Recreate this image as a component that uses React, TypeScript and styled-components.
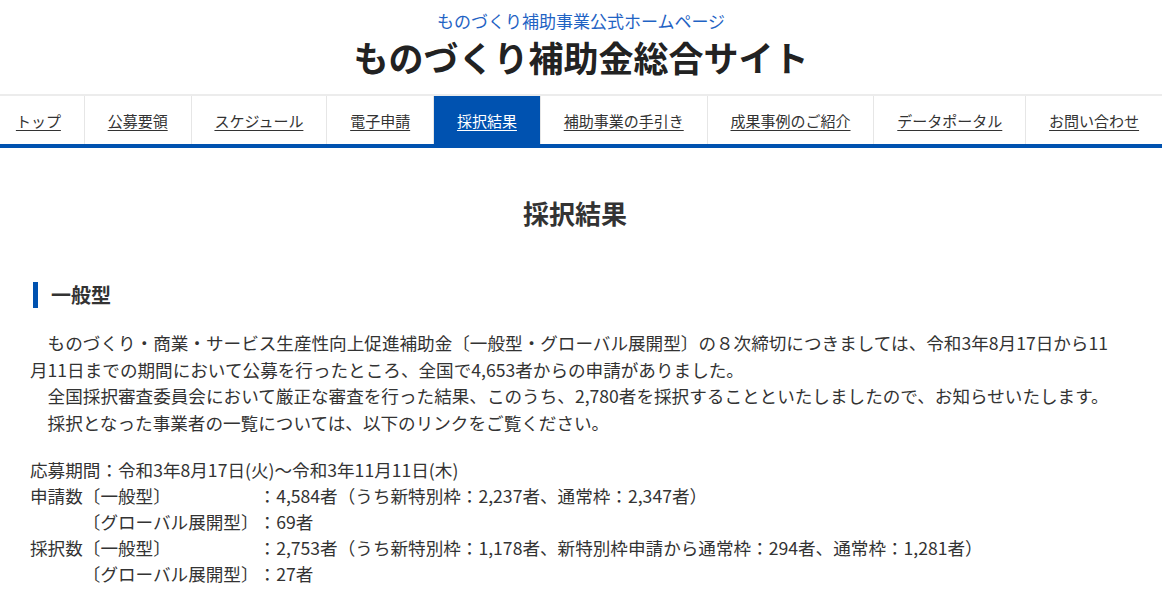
import { Fragment } from 'react';
import styled, { createGlobalStyle } from 'styled-components';

const GlobalStyle = createGlobalStyle`
    body {
        margin: 0;
        background: #fff;
        color: #333;
        font-family: "Noto Sans CJK JP", "Noto Sans", sans-serif;
    }
`;

const Header = styled.header`
    text-align: center;
    padding: 9px 0 15px;
`;

const SiteTagline = styled.p`
    margin: 0;
    font-size: 17px;
    line-height: 24px;
    color: #1f63c4;
`;

const SiteTitle = styled.h1`
    margin: 2px 0 0;
    font-size: 35px;
    line-height: 44px;
    font-weight: 700;
    color: #222;
`;

const Nav = styled.nav`
    display: flex;
    border-top: 2px solid #ececec;
    border-bottom: 4px solid #0052b0;
`;

const NavItem = styled.a<{ $active?: boolean }>`
    flex: 1 1 auto;
    display: flex;
    align-items: center;
    justify-content: center;
    height: 48px;
    padding: 0 22px;
    font-size: 15px;
    white-space: nowrap;
    text-decoration: underline;
    text-underline-offset: 3px;
    color: ${(p) => (p.$active ? '#fff' : '#333')};
    background: ${(p) => (p.$active ? '#0052b0' : '#fff')};
    border-left: 1px solid #e6e6e6;

    &:first-child {
        border-left: none;
        padding-left: 15px;
    }
`;

const Main = styled.main`
    width: 1090px;
    margin-left: 30px;
`;

const PageTitle = styled.h2`
    margin: 47px 0 0;
    text-align: center;
    font-size: 26px;
    line-height: 36px;
    font-weight: 700;
    color: #333;
`;

const SectionTitle = styled.h3`
    margin: 51px 0 0 3px;
    padding-left: 13px;
    border-left: 5px solid #0052b0;
    font-size: 20px;
    line-height: 26px;
    font-weight: 700;
    color: #333;
`;

const Lead = styled.div`
    margin-top: 22px;
    font-size: 17.6px;
    line-height: 26.5px;
`;

const Para = styled.p`
    margin: 0;
    text-indent: 1em;
`;

const Facts = styled.div`
    margin-top: 21px;
    font-size: 17.6px;
    line-height: 26px;
`;

const FactLine = styled.p`
    margin: 0;
`;

const CountGrid = styled.div`
    display: grid;
    grid-template-columns: auto auto 1fr;
`;

const counts = [
    ['申請数', '〔一般型〕', '：4,584者（うち新特別枠：2,237者、通常枠：2,347者）'],
    ['', '〔グローバル展開型〕', '：69者'],
    ['採択数', '〔一般型〕', '：2,753者（うち新特別枠：1,178者、新特別枠申請から通常枠：294者、通常枠：1,281者）'],
    ['', '〔グローバル展開型〕', '：27者'],
];

const navItems = [
    'トップ',
    '公募要領',
    'スケジュール',
    '電子申請',
    '採択結果',
    '補助事業の手引き',
    '成果事例のご紹介',
    'データポータル',
    'お問い合わせ',
];

export default function App() {
    return (
        <>
            <GlobalStyle />
            <Header>
                <SiteTagline>ものづくり補助事業公式ホームページ</SiteTagline>
                <SiteTitle>ものづくり補助金総合サイト</SiteTitle>
            </Header>
            <Nav>
                {navItems.map((label) => (
                    <NavItem key={label} href="#" $active={label === '採択結果'}>
                        {label}
                    </NavItem>
                ))}
            </Nav>
            <Main>
                <PageTitle>採択結果</PageTitle>
                <SectionTitle>一般型</SectionTitle>
                <Lead>
                    <Para>
                        ものづくり・商業・サービス生産性向上促進補助金〔一般型・グローバル展開型〕の８次締切につきましては、令和3年8月17日から11月11日までの期間において公募を行ったところ、全国で4,653者からの申請がありました。
                    </Para>
                    <Para>
                        全国採択審査委員会において厳正な審査を行った結果、このうち、2,780者を採択することといたしましたので、お知らせいたします。
                    </Para>
                    <Para>採択となった事業者の一覧については、以下のリンクをご覧ください。</Para>
                </Lead>
                <Facts>
                    <FactLine>応募期間：令和3年8月17日(火)～令和3年11月11日(木)</FactLine>
                    <CountGrid>
                        {counts.map(([group, kind, value], i) => (
                            <Fragment key={i}>
                                <span>{group}</span>
                                <span>{kind}</span>
                                <span>{value}</span>
                            </Fragment>
                        ))}
                    </CountGrid>
                </Facts>
            </Main>
        </>
    );
}
